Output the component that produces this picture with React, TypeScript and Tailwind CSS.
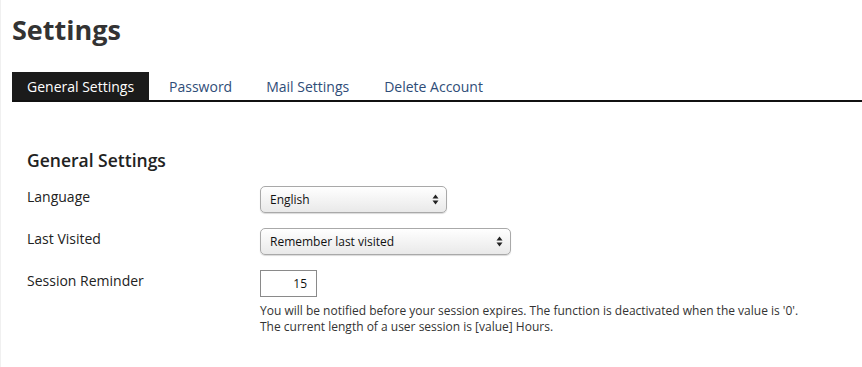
const tabs = ["General Settings", "Password", "Mail Settings", "Delete Account"];

const tabPad = ["px-[15px]", "pl-[20px] pr-[16px]", "pl-[18px] pr-[17px]", "px-[18px]"];

const Arrows = () => (
    <svg width="7" height="11" viewBox="0 0 7 11" className="shrink-0">
        <path d="M3.5 0.5 L6.5 4.5 L0.5 4.5 Z" fill="#222" />
        <path d="M3.5 10.5 L6.5 6.5 L0.5 6.5 Z" fill="#222" />
    </svg>
);

const FakeSelect = ({ value, width }: { value: string; width: string }) => (
    <div
        className={`${width} h-[27px] flex items-center justify-between pl-[9px] pr-[7px] rounded-[5px] border border-[#a9a9a9] bg-gradient-to-b from-white to-[#e9e9e9] shadow-[0_1px_1px_rgba(0,0,0,0.15)] text-[12px] text-[#111]`}
    >
        <span>{value}</span>
        <Arrows />
    </div>
);

const Row = ({ label, children }: { label: string; children: React.ReactNode }) => (
    <div className="flex">
        <div className="w-[233px] text-[14px] text-[#222]">{label}</div>
        <div>{children}</div>
    </div>
);

export default function App() {
    return (
        <div className="w-[862px] h-[367px] bg-white border-l border-[#f0f0f0] font-['Open_Sans',sans-serif] text-[#333] overflow-hidden">
            <h1 className="pl-[11px] pt-[10px] text-[27px] font-bold leading-[40px] text-[#333]">Settings</h1>

            <div className="mt-[22px] ml-[11px] flex border-b-2 border-[#111]">
                {tabs.map((t, i) => (
                    <div
                        key={t}
                        className={`h-[28px] ${tabPad[i]} flex items-center text-[14px] ${
                            i === 0 ? "bg-[#1b1b1b] text-white" : "text-[#2f4d78]"
                        }`}
                    >
                        {t}
                    </div>
                ))}
            </div>

            <div className="pl-[26px] pt-[47px]">
                <h2 className="text-[17.5px] font-semibold text-[#222] leading-[22px]">General Settings</h2>

                <div className="mt-[15px] flex flex-col gap-[15px]">
                    <Row label="Language">
                        <FakeSelect value="English" width="w-[187px]" />
                    </Row>
                    <Row label="Last Visited">
                        <FakeSelect value="Remember last visited" width="w-[251px]" />
                    </Row>
                    <Row label="Session Reminder">
                        <input
                            readOnly
                            value="15"
                            className="w-[57px] h-[27px] border border-[#8a8a8a] text-right pr-[9px] text-[12px] text-[#111] outline-none"
                        />
                        <p className="mt-[6px] text-[12px] leading-[16px] text-[#333]">
                            You will be notified before your session expires. The function is deactivated when the value is '0'.
                            <br />
                            The current length of a user session is [value] Hours.
                        </p>
                    </Row>
                </div>
            </div>
        </div>
    );
}
